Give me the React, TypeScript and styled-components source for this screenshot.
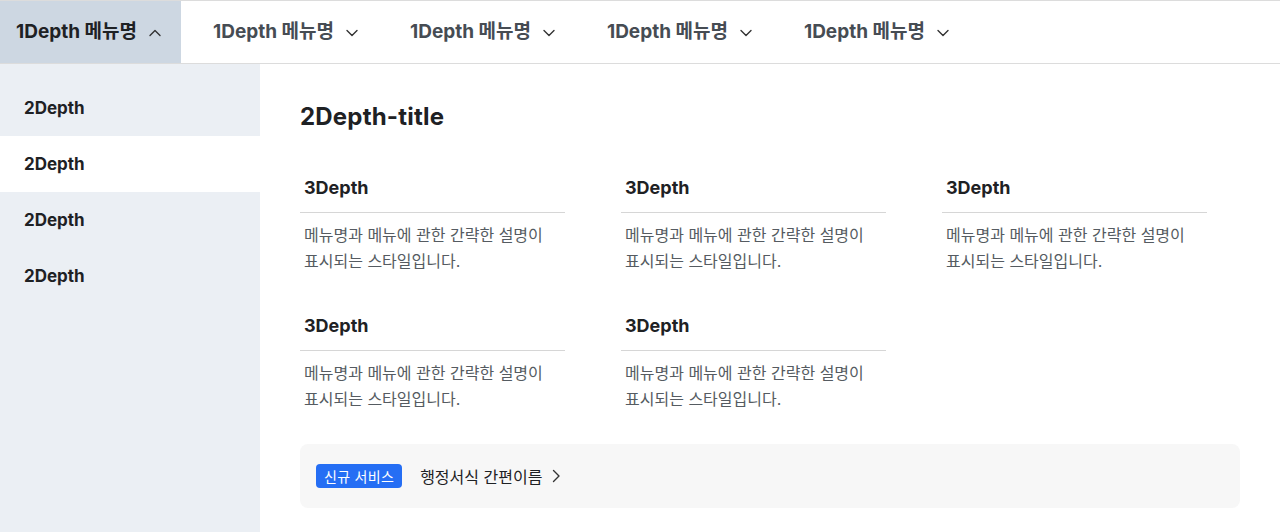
import React from "react";
import styled, { createGlobalStyle } from "styled-components";

const GlobalStyle = createGlobalStyle`
  html, body { margin: 0; padding: 0; background: #fff; }
  body { font-family: "Inter", "Noto Sans CJK KR", sans-serif; color: #1e2124; }
  * { box-sizing: border-box; }
`;

const Page = styled.div`
  width: 1280px;
  height: 532px;
  display: flex;
  flex-direction: column;
  overflow: hidden;
`;

const TopNav = styled.nav`
  display: flex;
  gap: 16px;
  height: 64px;
  border-top: 1px solid #dcdcdc;
  border-bottom: 1px solid #dcdcdc;
`;

const Tab = styled.button<{ $active?: boolean }>`
  display: flex;
  align-items: center;
  gap: 8px;
  padding: 0 16px;
  border: 0;
  background: ${(p) => (p.$active ? "#cdd7e2" : "transparent")};
  color: ${(p) => (p.$active ? "#1e2124" : "#464c53")};
  font-family: "Inter", "Noto Sans CJK KR", sans-serif;
  font-size: 19px;
  font-weight: 700;
  line-height: 24px;
  cursor: pointer;

  svg {
    margin-top: 1px;
  }
`;

const Body = styled.div`
  flex: 1;
  display: flex;
`;

const Side = styled.aside`
  width: 260px;
  background: #ebeff4;
  padding-top: 16px;
  display: flex;
  flex-direction: column;
`;

const SideItem = styled.div<{ $active?: boolean }>`
  height: 56px;
  display: flex;
  align-items: center;
  padding-left: 24px;
  background: ${(p) => (p.$active ? "#fff" : "transparent")};
  font-size: 17px;
  font-weight: 700;
  color: #1e2124;
`;

const Main = styled.main`
  flex: 1;
  padding: 36px 40px 0 40px;
`;

const Title = styled.h2`
  margin: 0;
  font-size: 24px;
  font-weight: 700;
  line-height: 34px;
  letter-spacing: 0.2px;
  color: #1e2124;
`;

const Grid = styled.div`
  margin-top: 42px;
  display: grid;
  grid-template-columns: repeat(3, 265px);
  column-gap: 56px;
  row-gap: 40px;
`;

const Card = styled.div`
  display: flex;
  flex-direction: column;
`;

const CardHead = styled.div`
  padding: 0 4px 12px;
  border-bottom: 1px solid #d6d6d6;
  font-size: 18px;
  font-weight: 700;
  line-height: 24px;
  color: #1e2124;
`;

const CardDesc = styled.p`
  margin: 9px 0 0;
  padding: 0 4px;
  font-size: 16px;
  line-height: 26px;
  color: #555b61;
`;

const Banner = styled.div`
  margin-top: 32px;
  height: 64px;
  background: #f7f7f7;
  border-radius: 8px;
  display: flex;
  align-items: center;
  padding: 0 16px;
  gap: 18px;
`;

const Badge = styled.span`
  height: 24px;
  padding: 0 8px;
  display: inline-flex;
  align-items: center;
  background: #256ef4;
  color: #fff;
  border-radius: 4px;
  font-size: 14px;
  letter-spacing: 0.3px;
`;

const BannerLink = styled.a`
  display: inline-flex;
  align-items: center;
  gap: 4px;
  font-size: 16px;
  color: #1e2124;
  text-decoration: none;
`;

const Chevron = ({ dir }: { dir: "up" | "down" | "right" }) => {
  const d =
    dir === "up" ? "M5 12.5 L10 7.5 L15 12.5" : dir === "down" ? "M5 7.5 L10 12.5 L15 7.5" : "M7.5 4.5 L13 10 L7.5 15.5";
  return (
    <svg width="20" height="20" viewBox="0 0 20 20" fill="none">
      <path d={d} stroke="#333" strokeWidth="1.4" strokeLinecap="round" strokeLinejoin="round" />
    </svg>
  );
};

export default function App() {
  return (
    <Page>
      <GlobalStyle />
      <TopNav>
        {[0, 1, 2, 3, 4].map((i) => (
          <Tab key={i} $active={i === 0}>
            1Depth 메뉴명
            <Chevron dir={i === 0 ? "up" : "down"} />
          </Tab>
        ))}
      </TopNav>
      <Body>
        <Side>
          {[0, 1, 2, 3].map((i) => (
            <SideItem key={i} $active={i === 1}>
              2Depth
            </SideItem>
          ))}
        </Side>
        <Main>
          <Title>2Depth-title</Title>
          <Grid>
            {[0, 1, 2, 3, 4].map((i) => (
              <Card key={i}>
                <CardHead>3Depth</CardHead>
                <CardDesc>
                  메뉴명과 메뉴에 관한 간략한 설명이
                  <br />
                  표시되는 스타일입니다.
                </CardDesc>
              </Card>
            ))}
          </Grid>
          <Banner>
            <Badge>신규 서비스</Badge>
            <BannerLink href="#">
              행정서식 간편이름
              <Chevron dir="right" />
            </BannerLink>
          </Banner>
        </Main>
      </Body>
    </Page>
  );
}
